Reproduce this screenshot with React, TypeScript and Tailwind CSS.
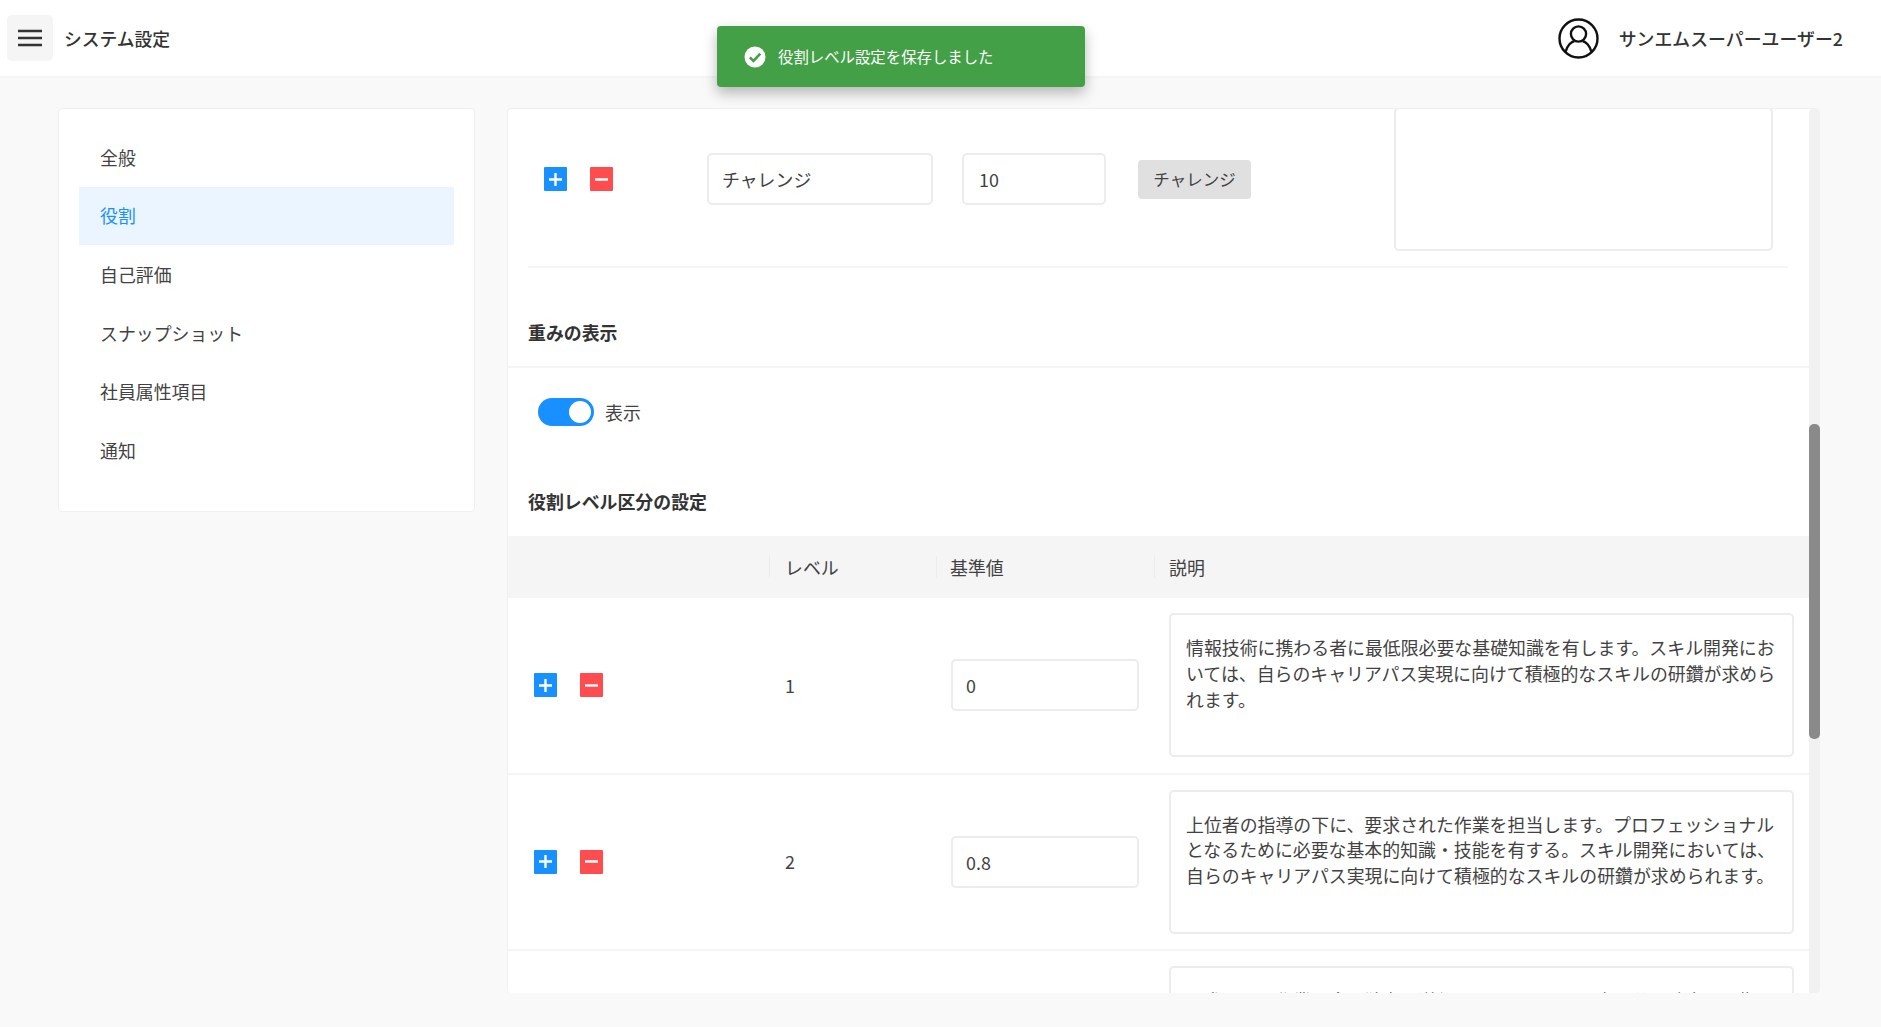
import React from "react";

const nav = ["全般", "役割", "自己評価", "スナップショット", "社員属性項目", "通知"];

const levels = [
  {
    level: "1",
    value: "0",
    text: "情報技術に携わる者に最低限必要な基礎知識を有します。スキル開発においては、自らのキャリアパス実現に向けて積極的なスキルの研鑽が求められます。",
  },
  {
    level: "2",
    value: "0.8",
    text: "上位者の指導の下に、要求された作業を担当します。プロフェッショナルとなるために必要な基本的知識・技能を有する。スキル開発においては、自らのキャリアパス実現に向けて積極的なスキルの研鑽が求められます。",
  },
  {
    level: "3",
    value: "1.6",
    text: "要求された作業を全て独力で遂行します。スキルの専門分野確立を目指し、プロフェッショナルとして必要な応用的知識・技能を有します。スキル開発においては、自らのスキルの研鑽を継続することが求められます。",
  },
];

function PlusButton() {
  return (
    <button className="flex h-6 w-[23px] shrink-0 items-center justify-center rounded-[1px] bg-[#1890ff]">
      <svg width="15" height="15" viewBox="0 0 15 15" fill="none" stroke="#fff" strokeWidth="2.4">
        <path d="M1 7.5h13M7.5 1v13" />
      </svg>
    </button>
  );
}

function MinusButton() {
  return (
    <button className="flex h-6 w-[23px] shrink-0 items-center justify-center rounded-[1px] bg-[#ff4d4f]">
      <svg width="15" height="15" viewBox="0 0 15 15" fill="none" stroke="#fff" strokeWidth="2.4">
        <path d="M1 7.5h13" />
      </svg>
    </button>
  );
}

const inputClass =
  "h-[52px] rounded-[5px] border-2 border-[#ececec] bg-white px-[13px] text-[17.9px] text-[#424242] outline-none";

function Area({ text, className }: { text?: string; className?: string }) {
  return (
    <textarea
      readOnly
      defaultValue={text}
      className={
        "h-[144px] resize-none overflow-hidden rounded-[5px] border-2 border-[#ececec] bg-white px-[15px] pt-5 text-[17.9px] leading-[25.8px] text-[#424242] outline-none " +
        (className ?? "")
      }
    />
  );
}

export default function App() {
  return (
    <div className="relative flex h-[1027px] w-full flex-col overflow-hidden bg-[#f9f9f9] font-['Noto_Sans_CJK_JP',sans-serif] text-[#424242]">
      <header className="flex h-[78px] shrink-0 items-center justify-between border-b-2 border-[#f5f5f5] bg-white pl-[7px] pr-[38px]">
        <div className="flex items-center gap-[11px]">
          <button className="flex h-[46px] w-[46px] items-center justify-center rounded-[5px] bg-[#f5f5f5]">
            <svg width="24" height="18" viewBox="0 0 24 18" fill="none" stroke="#333" strokeWidth="2.5">
              <path d="M0 2h24M0 9h24M0 16h24" />
            </svg>
          </button>
          <span className="text-[17.8px] font-medium text-[#333]">システム設定</span>
        </div>
        <div className="flex items-center gap-5">
          <svg width="41" height="41" viewBox="0 0 41 41" fill="none" stroke="#111" strokeWidth="2.4">
            <circle cx="20.5" cy="20.5" r="19" />
            <circle cx="20.5" cy="16" r="7.6" />
            <path d="M7.5 34c1.5-6.500 6-10.500 9-11M33.500 34c-1.500-6.500-6-10.500-9-11" />
          </svg>
          <span className="text-[17.9px] font-medium text-[#333]">サンエムスーパーユーザー2</span>
        </div>
      </header>

      <main className="flex items-start gap-8 pl-[58px] pt-[30px]">
        <nav className="w-[417px] shrink-0 rounded-[4px] border border-[#f0f0f0] bg-white px-5 pb-[31px] pt-[19px]">
          {nav.map((item) => (
            <div
              key={item}
              className={
                "flex h-[58.6px] items-center pl-[21px] text-[17.9px] " +
                (item === "役割" ? "bg-[#ebf5ff] text-[#1890ff]" : "text-[#424242]")
              }
            >
              {item}
            </div>
          ))}
        </nav>

        <section className="flex h-[885px] w-[1313px] shrink-0 overflow-hidden rounded-[4px] border-t border-l border-[#f0f0f0] bg-white">
          <div className="-mt-[19px] min-w-0 flex-1">
            <div className="ml-5 mr-[21px] flex items-center border-b-2 border-[#f5f5f5] pb-[15px] pl-4 pt-[17px]">
              <div className="flex w-[163px] shrink-0 gap-[23px]">
                <PlusButton />
                <MinusButton />
              </div>
              <input readOnly defaultValue="チャレンジ" className={inputClass + " w-[226px]"} />
              <input readOnly defaultValue="10" className={inputClass + " ml-[29px] w-[144px] pl-[15px]"} />
              <span className="ml-8 flex h-[39px] w-[113px] items-center justify-center rounded-[4px] bg-[#e0e0e0] text-[16.5px]">
                チャレンジ
              </span>
              <Area className="ml-auto mr-[15px] w-[379px]" />
            </div>

            <div className="flex h-[100px] items-center border-b-2 border-[#f5f5f5] pl-5 pt-[31px]">
              <h2 className="text-[17.9px] font-bold text-[#333]">重みの表示</h2>
            </div>

            <div className="flex h-[88px] items-center pl-[30px]">
              <span className="flex h-7 w-14 items-center justify-end rounded-full bg-[#1890ff] pr-[3px]">
                <span className="h-[22px] w-[22px] rounded-full bg-white" />
              </span>
              <span className="ml-[11px] text-[17.9px]">表示</span>
            </div>

            <div className="flex h-[80px] items-center pl-5 pt-[10px]">
              <h2 className="text-[17.9px] font-bold text-[#333]">役割レベル区分の設定</h2>
            </div>

            <div className="grid h-[62px] grid-cols-[261px_167px_218px_1fr] items-center bg-[#f5f5f5] text-[17.9px]">
              <div />
              <div className="flex h-[22px] items-center border-l border-[#ececec] pl-[15px]">レベル</div>
              <div className="flex h-[22px] items-center border-l border-[#ececec] pl-[13px]">基準値</div>
              <div className="flex h-[22px] items-center border-l border-[#ececec] pl-[14px]">説明</div>
            </div>

            {levels.map((row) => (
              <div
                key={row.level}
                className="grid grid-cols-[261px_167px_218px_1fr] items-center border-b-2 border-[#f5f5f5] pb-[15.5px] pt-[15px] text-[17.9px]"
              >
                <div className="flex gap-[23px] pl-[26px]">
                  <PlusButton />
                  <MinusButton />
                </div>
                <div className="pl-4">{row.level}</div>
                <div className="pl-[15px]">
                  <input readOnly defaultValue={row.value} className={inputClass + " w-[188px]"} />
                </div>
                <div className="flex px-[15px]">
                  <Area text={row.text} className="w-full" />
                </div>
              </div>
            ))}
          </div>

          <div className="h-full w-[11px] shrink-0 rounded-t-[4px] bg-[#f1f1f1] pt-[315px]">
            <div className="h-[315px] w-full rounded-[5px] bg-[#8a8a8a]" />
          </div>
        </section>
      </main>

      <div className="absolute left-[717px] top-[26px] flex h-[61px] w-[368px] items-center rounded-[4px] bg-[#43a047] pl-[27px] text-[15.4px] text-white shadow-[0_6px_14px_rgba(0,0,0,0.28)]">
        <svg width="22" height="22" viewBox="0 0 22 22" className="shrink-0">
          <circle cx="11" cy="11" r="10.500" fill="#fff" />
          <path d="M5.800 11.300l3.700 3.700 6.800-7.300" fill="none" stroke="#43a047" strokeWidth="2.600" />
        </svg>
        <span className="ml-3">役割レベル設定を保存しました</span>
      </div>
    </div>
  );
}
